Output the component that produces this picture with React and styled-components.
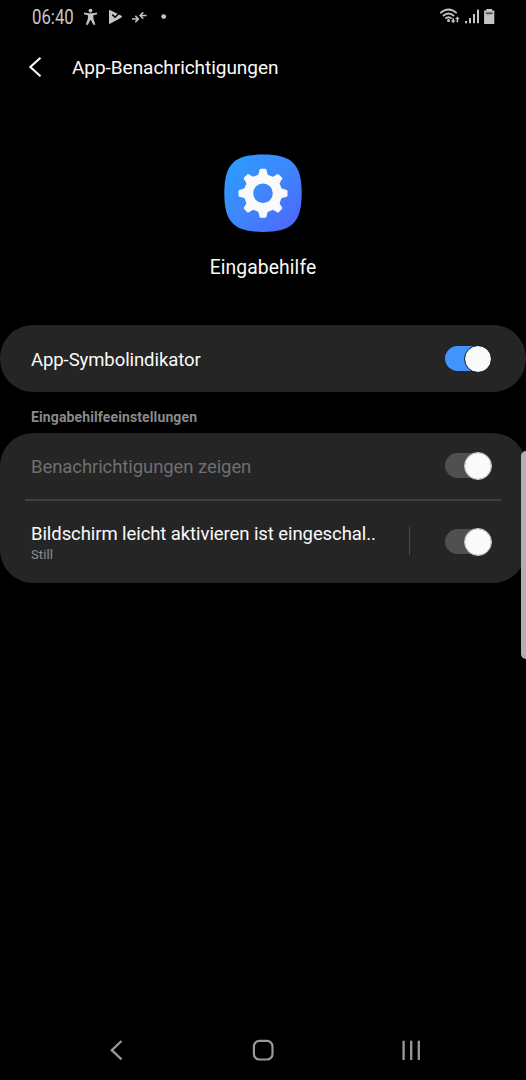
import React from 'react';
import styled, { createGlobalStyle } from 'styled-components';

const GlobalStyle = createGlobalStyle`
  * {
    box-sizing: border-box;
  }

  body {
    margin: 0;
    background: #000;
    color: #fafafa;
    font-family: Roboto, 'Liberation Sans', sans-serif;
  }
`;

const Screen = styled.div`
  position: relative;
  display: flex;
  flex-direction: column;
  height: 1080px;
  width: 526px;
  background: #000;
  overflow: hidden;
`;

const StatusBar = styled.div`
  display: flex;
  align-items: center;
  justify-content: space-between;
  height: 34px;
  padding: 0 31px 0 31.5px;

  svg {
    display: block;
  }
`;

const StatusGroup = styled.div`
  display: flex;
  align-items: center;
`;

const Clock = styled.span`
  width: 50.5px;
  padding-top: 1px;
  font-size: 19.5px;
  line-height: 33px;
  color: #c8c8c8;
  transform: scaleX(0.86);
  transform-origin: left;
`;

const AppBar = styled.header`
  display: flex;
  align-items: center;
  height: 66px;
  padding-left: 27px;

  svg {
    display: block;
  }
`;

const Title = styled.h1`
  margin: 1px 0 0 28px;
  font-size: 19px;
  font-weight: 400;
  line-height: 24px;
  letter-spacing: -0.04px;
  white-space: nowrap;
`;

const Hero = styled.div`
  display: flex;
  flex-direction: column;
  align-items: center;
  height: 225px;
  padding-top: 54px;

  svg {
    display: block;
  }
`;

const AppName = styled.div`
  margin-top: 24px;
  font-size: 19.3px;
  line-height: 24px;
  letter-spacing: 0.1px;
`;

const Card = styled.section`
  border-radius: 33px;
  background: #252525;
`;

const Row = styled.div`
  display: flex;
  align-items: center;
  height: ${({ $height }) => $height}px;
  padding: 0 34px 0 31px;
`;

const Texts = styled.div`
  flex: 1;
  padding-top: ${({ $top }) => $top || 1}px;
`;

const Label = styled.div`
  font-size: 18.5px;
  line-height: 24px;
  letter-spacing: -0.08px;
  white-space: nowrap;
  color: ${({ $disabled }) => ($disabled ? '#6f6f6f' : '#fafafa')};
`;

const Hint = styled.div`
  font-size: 13px;
  line-height: 18px;
  letter-spacing: 0.1px;
  color: #8f8f8f;
`;

const SectionTitle = styled.h2`
  margin: 0;
  height: 41px;
  padding: 15px 31px 0;
  font-size: 14px;
  font-weight: 700;
  line-height: 20px;
  letter-spacing: 0.12px;
  color: #8a8a8a;
`;

const Divider = styled.hr`
  height: 2px;
  margin: 0 25px;
  border: 0;
  background: #404040;
`;

const Separator = styled.span`
  width: 1px;
  height: 28px;
  margin: 0 35px 2px 0;
  background: #4a4a4a;
`;

const Track = styled.span`
  display: flex;
  align-items: center;
  justify-content: flex-end;
  width: 47px;
  height: 25px;
  margin-bottom: ${({ $on }) => ($on ? 0 : 1)}px;
  border-radius: 13px;
  background: linear-gradient(
    to right,
    ${({ $on }) => ($on ? '#4294fd' : '#505050')} 34px,
    transparent 34px
  );
`;

const Thumb = styled.span`
  flex: none;
  width: 28px;
  height: 28px;
  border: 1px solid ${({ $on }) => ($on ? '#1d2633' : '#cfcfcf')};
  border-radius: 50%;
  background: #fafafa;
  background-clip: padding-box;
`;

const EdgeHandle = styled.div`
  position: absolute;
  top: 451px;
  right: 0;
  width: 5px;
  height: 208px;
  border-radius: 5px 0 0 5px;
  background: rgba(184, 184, 184, 0.95);
`;

const NavBar = styled.nav`
  display: flex;
  justify-content: space-between;
  align-items: center;
  height: 60px;
  margin-top: auto;
  padding: 0 105px 0 110px;
`;

const Switch = ({ on }) => (
  <Track $on={on} role="switch" aria-checked={!!on}>
    <Thumb $on={on} />
  </Track>
);

const teeth = [0, 45, 90, 135, 180, 225, 270, 315];

const SettingsIcon = () => (
  <svg width="78" height="78" viewBox="-39 -39.3 78 78">
    <defs>
      <linearGradient id="tile" x1="0" y1="0" x2="1" y2="1">
        <stop offset="0.08" stopColor="#2b9bff" />
        <stop offset="0.5" stopColor="#3f86fc" />
        <stop offset="0.92" stopColor="#4c68fc" />
      </linearGradient>
    </defs>
    <path
      d="M0-38.7C29-38.7 38.7-29 38.7 0S29 38.7 0 38.7-38.7 29-38.7 0-29-38.7 0-38.7Z"
      fill="url(#tile)"
    />
    <circle r="14.4" fill="none" stroke="#fafafa" strokeWidth="9.2" />
    {teeth.map((angle) => (
      <path
        key={angle}
        d="M-6-17Q-4-19-3.6-23Q-3.5-24.5-2.2-24.5H2.2Q3.5-24.5 3.6-23Q4-19 6-17Z"
        fill="#fafafa"
        transform={`rotate(${angle})`}
      />
    ))}
  </svg>
);

const NotificationIcons = () => (
  <svg width="90" height="20" viewBox="82 6 90 20" fill="#c4c4c4">
    {/* accessibility figure */}
    <circle cx="90.5" cy="9.6" r="1.9" />
    <path d="M84 11.5L88.5 12.2H92.5L97 11.5V13.3L93.4 14.3V17.5L95.4 23.7H93.3L90.9 18.9H90.3L87.9 23.7H85.8L87.9 17.5V14.3L84 13.3Z" />
    {/* play store check */}
    <path d="M109 9.5Q109 8.6 110 9.1L121.5 14.8Q122.5 15.6 121.5 16.4L110 22.8Q109 23.2 109 22.2Z" />
    <path d="M112.3 13.6L115 16.2L120.4 11" fill="none" stroke="#000" strokeWidth="1.5" />
    {/* converging arrows */}
    <path
      d="M132 18H138M135.3 14.9L138.4 18L135.3 21.1M146.5 14.5H140.5M143.3 11.4L140.1 14.5L143.3 17.6"
      fill="none"
      stroke="#c4c4c4"
      strokeWidth="1.5"
    />
    <circle cx="163.7" cy="15.6" r="2.4" />
  </svg>
);

const SystemIcons = () => (
  <svg width="56" height="20" viewBox="439 6.5 56 20" fill="#c4c4c4">
    <g fill="none" stroke="#c4c4c4" strokeWidth="1.7">
      <path d="M440.3 12.7Q448.5 5.3 456.7 12.7" />
      <path d="M442.9 15.5Q448.5 10.5 454.1 15.5" />
      <path d="M445.3 18.1Q448.5 15.4 451.7 18.1" />
    </g>
    <circle cx="448.5" cy="20" r="1.5" />
    <path d="M452.4 17.8H454V20.1H455.6L453.2 22.8L450.8 20.1H452.4ZM456.6 21.8H458.2V18.5H459.7L457.4 15.9L455.1 18.5H456.6Z" />
    <path d="M465 20.4H467V22.8H465ZM469 17.5H471V22.8H469ZM473 13.6H475V22.8H473ZM477 9H479V22.8H477Z" />
    <path d="M486.3 8.5H492.1V10.1H494.3V23.5H484.1V10.1H486.3Z" />
    <path d="M485.8 11.8H492.6V13.8H485.8Z" fill="#555" />
  </svg>
);

const App = () => (
  <Screen>
    <GlobalStyle />
    <StatusBar>
      <StatusGroup>
        <Clock>06:40</Clock>
        <NotificationIcons />
      </StatusGroup>
      <SystemIcons />
    </StatusBar>

    <AppBar>
      <svg width="17" height="22" viewBox="0 0 17 22" fill="none" stroke="#fafafa" strokeWidth="2.1">
        <path d="M13.5 1.7L3.3 11L13.5 20.3" />
      </svg>
      <Title>App-Benachrichtigungen</Title>
    </AppBar>

    <Hero>
      <SettingsIcon />
      <AppName>Eingabehilfe</AppName>
    </Hero>

    <Card>
      <Row $height={67}>
        <Texts $top={3}>
          <Label>App-Symbolindikator</Label>
        </Texts>
        <Switch on />
      </Row>
    </Card>

    <SectionTitle>Eingabehilfeeinstellungen</SectionTitle>

    <Card>
      <Row $height={66}>
        <Texts>
          <Label $disabled>Benachrichtigungen zeigen</Label>
        </Texts>
        <Switch />
      </Row>
      <Divider />
      <Row $height={82}>
        <Texts>
          <Label>Bildschirm leicht aktivieren ist eingeschal..</Label>
          <Hint>Still</Hint>
        </Texts>
        <Separator />
        <Switch />
      </Row>
    </Card>

    <EdgeHandle />

    <NavBar>
      <svg width="14" height="22" viewBox="0 0 14 22" fill="none" stroke="#999" strokeWidth="2.3">
        <path d="M11.5 2L1.8 11.2L11.5 20.4" />
      </svg>
      <svg width="22" height="22" viewBox="0 0 22 22" fill="none" stroke="#999" strokeWidth="2.2">
        <rect x="1.9" y="1.9" width="18.6" height="18.6" rx="5.5" />
      </svg>
      <svg width="20" height="22" viewBox="0 0 20 22" fill="none" stroke="#999" strokeWidth="2.3">
        <path d="M2.6 1.7V20.9M10.2 1.7V20.9M17.8 1.7V20.9" />
      </svg>
    </NavBar>
  </Screen>
);

export default App;
